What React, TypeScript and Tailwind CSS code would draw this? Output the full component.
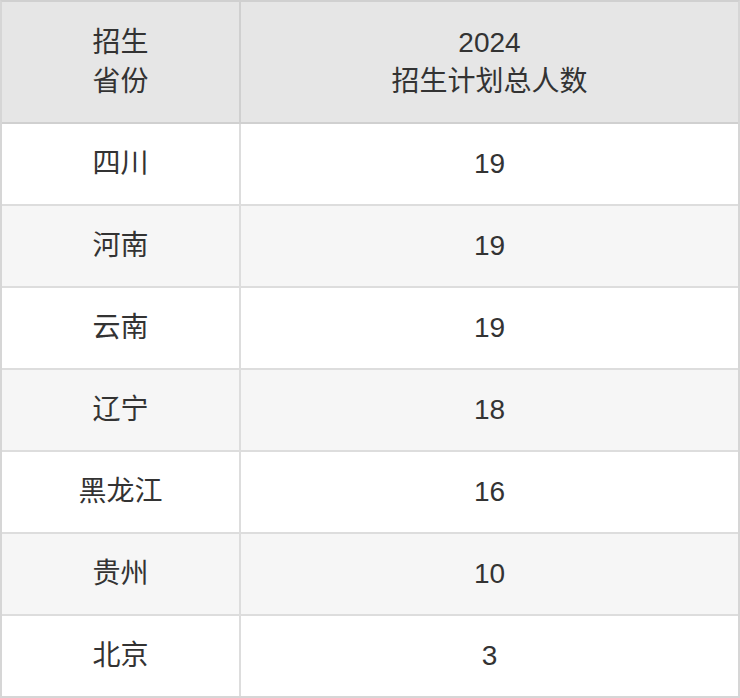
const rows: [string, string][] = [
  ['四川', '19'],
  ['河南', '19'],
  ['云南', '19'],
  ['辽宁', '18'],
  ['黑龙江', '16'],
  ['贵州', '10'],
  ['北京', '3'],
];

export default function App() {
  return (
    <div
      className="w-[740px] h-[698px] bg-white text-[#333333] text-[28px]"
      style={{ fontFamily: '"Liberation Sans", "Noto Sans CJK SC", sans-serif' }}
    >
      <div className="border-2 border-[#d6d6d6] border-t-[#d0d0d0]">
        {/* Header */}
        <div className="flex h-[122px] bg-[#e6e6e6] border-b-2 border-[#d0d0d0]">
          <div className="w-[239px] border-r-2 border-[#d0d0d0] flex items-center justify-center text-center leading-[39px]">
            <div>
              招生
              <br />
              省份
            </div>
          </div>
          <div className="flex-1 flex items-center justify-center text-center leading-[39px]">
            <div>
              2024
              <br />
              招生计划总人数
            </div>
          </div>
        </div>

        {/* Body */}
        {rows.map(([prov, count], i) => (
          <div
            key={prov}
            className={
              'flex ' +
              (i < rows.length - 1 ? 'h-[82px] border-b-2 border-[#dddddd] ' : 'h-[80px] ') +
              (i % 2 === 1 ? 'bg-[#f6f6f6]' : 'bg-white')
            }
          >
            <div className="w-[239px] border-r-2 border-[#dddddd] flex items-center justify-center">
              {prov}
            </div>
            <div className="flex-1 flex items-center justify-center">{count}</div>
          </div>
        ))}
      </div>
    </div>
  );
}
